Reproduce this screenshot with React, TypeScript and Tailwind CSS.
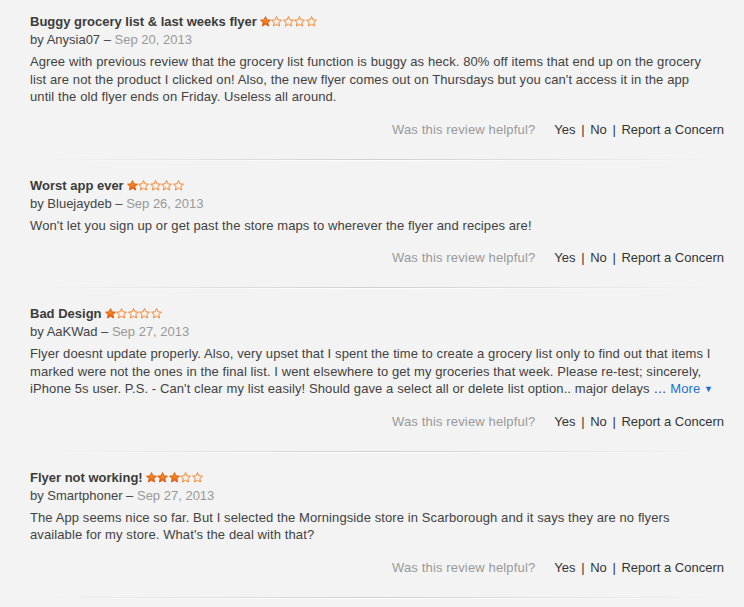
import React from 'react';

type Review = {
  title: string;
  rating: number;
  author: string;
  date: string;
  lines: string[];
  more?: boolean;
};

const reviews: Review[] = [
  {
    title: 'Buggy grocery list & last weeks flyer',
    rating: 1,
    author: 'Anysia07',
    date: 'Sep 20, 2013',
    lines: [
      'Agree with previous review that the grocery list function is buggy as heck. 80% off items that end up on the grocery',
      "list are not the product I clicked on! Also, the new flyer comes out on Thursdays but you can't access it in the app",
      'until the old flyer ends on Friday. Useless all around.',
    ],
  },
  {
    title: 'Worst app ever',
    rating: 1,
    author: 'Bluejaydeb',
    date: 'Sep 26, 2013',
    lines: ["Won't let you sign up or get past the store maps to wherever the flyer and recipes are!"],
  },
  {
    title: 'Bad Design',
    rating: 1,
    author: 'AaKWad',
    date: 'Sep 27, 2013',
    lines: [
      'Flyer doesnt update properly. Also, very upset that I spent the time to create a grocery list only to find out that items I',
      'marked were not the ones in the final list. I went elsewhere to get my groceries that week. Please re-test; sincerely,',
      "iPhone 5s user. P.S. - Can't clear my list easily! Should gave a select all or delete list option.. major delays \u2026",
    ],
    more: true,
  },
  {
    title: 'Flyer not working!',
    rating: 3,
    author: 'Smartphoner',
    date: 'Sep 27, 2013',
    lines: [
      'The App seems nice so far. But I selected the Morningside store in Scarborough and it says they are no flyers',
      "available for my store. What's the deal with that?",
    ],
  },
];

const STAR =
  'M5.5 0.6 L6.95 3.85 L10.45 4.2 L7.8 6.55 L8.55 10 L5.5 8.2 L2.45 10 L3.2 6.55 L0.55 4.2 L4.05 3.85 Z';

const Star: React.FC<{ filled: boolean }> = ({ filled }) => (
  <svg width="11" height="11" viewBox="0 0 11 11" className="block">
    <defs>
      <linearGradient id="starFill" x1="0" y1="0" x2="0" y2="1">
        <stop offset="0" stopColor="#ffa62b" />
        <stop offset="1" stopColor="#e8590c" />
      </linearGradient>
    </defs>
    <path
      d={STAR}
      fill={filled ? 'url(#starFill)' : '#fbf3ec'}
      stroke={filled ? '#d9560a' : '#ee7a22'}
      strokeWidth="0.9"
      strokeLinejoin="round"
    />
  </svg>
);

const Stars: React.FC<{ rating: number }> = ({ rating }) => (
  <span className="ml-[3px] inline-flex items-center gap-[0.5px] align-[-1px]">
    {[0, 1, 2, 3, 4].map((i) => (
      <Star key={i} filled={i < rating} />
    ))}
  </span>
);

const Separator: React.FC = () => (
  <div className="mt-5 mb-4 px-[10px]">
    <div className="h-px bg-gradient-to-r from-transparent via-[#cfcfcf] to-transparent" />
    <div className="h-px bg-gradient-to-r from-transparent via-white to-transparent" />
  </div>
);

const ReviewItem: React.FC<{ review: Review }> = ({ review }) => (
  <div>
    <div className="text-[13px] leading-[18px] font-bold text-[#3b3b3b]">
      {review.title}
      <Stars rating={review.rating} />
    </div>
    <div className="text-[13px] leading-[18px] text-[#444]">
      by {review.author} – <span className="text-[#999]">{review.date}</span>
    </div>
    <div className="mt-1 text-[13px] leading-[17.5px] tracking-[0.1px] text-[#424242]">
      {review.lines.map((line, i) => (
        <div key={i} className="whitespace-nowrap h-[17.5px]">
          {line}
          {review.more && i === review.lines.length - 1 && (
            <span className="text-[#1d6fd4]">
              {' '}More <span className="text-[9px] leading-none align-[1px]">▼</span>
            </span>
          )}
        </div>
      ))}
    </div>
    <div className="mt-[15px] flex justify-end text-[13px] leading-[18px]">
      <span className="text-[#999] tracking-[0.15px]">Was this review helpful?</span>
      <span className="ml-[19px] text-[#333]">
        Yes <span className="mx-[2px]">|</span> No <span className="mx-[2px]">|</span> Report a Concern
      </span>
    </div>
  </div>
);

const App: React.FC = () => {
  return (
    <div
      className="min-h-[607px] bg-[#f3f3f3] pt-[13px] pl-[30px] pr-[20px]"
      style={{ fontFamily: '"Liberation Sans", Arial, sans-serif' }}
    >
      {reviews.map((r) => (
        <div key={r.author}>
          <ReviewItem review={r} />
          <Separator />
        </div>
      ))}
    </div>
  );
};

export default App;
